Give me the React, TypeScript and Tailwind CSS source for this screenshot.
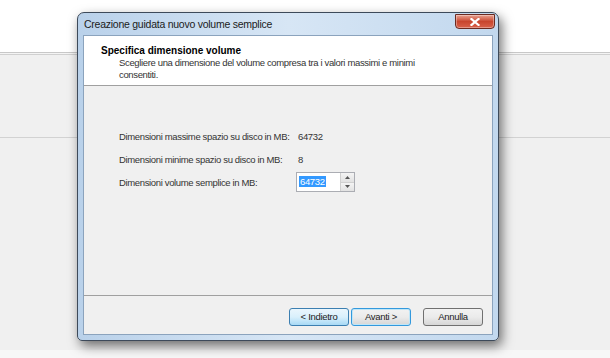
import React from 'react'

const font = { fontFamily: '"Liberation Sans", Arial, sans-serif' }

function CloseButton() {
  return (
    <div className="absolute right-[3px] top-[1px] flex h-[15px] w-[40px] items-center justify-center rounded-b-[4px] border border-[#6b2a20] bg-gradient-to-b from-[#e8a08f] via-[#c8452e] to-[#d8614a] shadow-[inset_0_0_0_1px_rgba(255,255,255,0.35)]">
      <svg width="10" height="8" viewBox="0 0 10 8">
        <path d="M1.5 1 L8.5 7 M8.5 1 L1.5 7" stroke="#fff" strokeWidth="2.2" strokeLinecap="square" />
      </svg>
    </div>
  )
}

function WinButton({ label, hot }: { label: string; hot?: string }) {
  const cls =
    hot === 'blue'
      ? 'border-[#3c7fb1] bg-gradient-to-b from-[#eaf6fd] via-[#d9f0fc] to-[#a7d9f5]'
      : hot === 'focus'
        ? 'border-[#3399dd] bg-gradient-to-b from-[#f2f2f2] via-[#ebebeb] to-[#d6d6d6] shadow-[inset_0_0_0_1px_#bfe6f8]'
        : 'border-[#707070] bg-gradient-to-b from-[#f2f2f2] via-[#ebebeb] to-[#d6d6d6]'
  return (
    <div
      className={`flex h-[18px] w-[60px] items-center justify-center rounded-[3px] border text-[9.5px] tracking-[-0.3px] text-[#222] ${cls}`}
    >
      {label}
    </div>
  )
}

function Row({ label, children }: { label: string; children: React.ReactNode }) {
  return (
    <div className="flex h-[20px] items-center">
      <div className="w-[177px] shrink-0 whitespace-nowrap">{label}</div>
      {children}
    </div>
  )
}

export default function App() {
  return (
    <div className="relative h-[358px] w-[610px] overflow-hidden bg-white" style={font}>
      {/* desktop background */}
      <div className="flex h-full flex-col">
        <div className="h-[52px] bg-white" />
        <div className="h-[1px] bg-[#c8c8c8]" />
        <div className="h-[1px] bg-[#f4f4f4]" />
        <div className="h-[1px] bg-[#d0d0d0]" />
        <div className="h-[82px] bg-[#f0f0f0]" />
        <div className="h-[1px] bg-[#d2d2d2]" />
        <div className="h-[212px] bg-[#f0f0f0]" />
        <div className="flex-1 bg-[#f7f7f7]" />
      </div>

      {/* dialog window */}
      <div className="absolute left-[77px] top-[12px] flex h-[329px] w-[422px] flex-col rounded-t-[7px] rounded-b-[5px] border border-[#3d4a5a] bg-gradient-to-r from-[#b9d1ea] via-[#d7e6f5] to-[#c2d8ee] px-[5px] pb-[5px] shadow-[3px_5px_12px_rgba(0,0,0,0.55)]">
        <CloseButton />
        <div className="flex h-[22px] shrink-0 items-center pl-[1px] pt-[1px] text-[10.5px] tracking-[-0.25px] text-[#1b1b1b]">
          Creazione guidata nuovo volume semplice
        </div>
        <div className="flex flex-1 flex-col border border-[#8ba3bd] bg-[#f0f0f0]">
          <div className="h-[50px] shrink-0 border-b border-[#a0a0a0] bg-white pl-[17px] pt-[8px]">
            <div className="text-[10px] font-bold leading-[13px] text-black">Specifica dimensione volume</div>
            <div className="pl-[18px] text-[9.5px] leading-[12px] tracking-[-0.35px] text-[#333]">
              Scegliere una dimensione del volume compresa tra i valori massimi e minimi
              <br />
              consentiti.
            </div>
          </div>
          <div className="flex flex-1 flex-col pl-[35px] pt-[41px] text-[9.5px] tracking-[-0.35px] text-[#333]">
            <div className="flex flex-col gap-[3px]">
              <Row label="Dimensioni massime spazio su disco in MB:">
                <span className="pl-[2px]">64732</span>
              </Row>
              <Row label="Dimensioni minime spazio su disco in MB:">
                <span className="pl-[2px]">8</span>
              </Row>
              <Row label="Dimensioni volume semplice in MB:">
                <div className="-mt-[2px] flex h-[20px] w-[59px] items-center border border-[#abadb3] bg-white">
                  <div className="flex-1 pl-[2px]">
                    <span className="bg-[#3399ff] px-[1px] text-white">64732</span>
                  </div>
                  <div className="flex h-full w-[14px] flex-col border-l border-[#d0d0d0]">
                    <div className="flex flex-1 items-center justify-center bg-gradient-to-b from-[#f4f4f4] to-[#e2e2e2]">
                      <svg width="5" height="3" viewBox="0 0 5 3">
                        <path d="M0 3 L2.5 0 L5 3 Z" fill="#555" />
                      </svg>
                    </div>
                    <div className="flex flex-1 items-center justify-center border-t border-[#d0d0d0] bg-gradient-to-b from-[#f4f4f4] to-[#e2e2e2]">
                      <svg width="5" height="3" viewBox="0 0 5 3">
                        <path d="M0 0 L2.5 3 L5 0 Z" fill="#555" />
                      </svg>
                    </div>
                  </div>
                </div>
              </Row>
            </div>
          </div>
          <div className="h-[39px] shrink-0 border-t border-[#a0a0a0]">
            <div className="flex justify-end gap-[2px] pr-[9px] pt-[12px]">
              <WinButton label="< Indietro" hot="blue" />
              <WinButton label="Avanti >" hot="focus" />
              <div className="w-[8px]" />
              <WinButton label="Annulla" />
            </div>
          </div>
        </div>
      </div>
    </div>
  )
}
